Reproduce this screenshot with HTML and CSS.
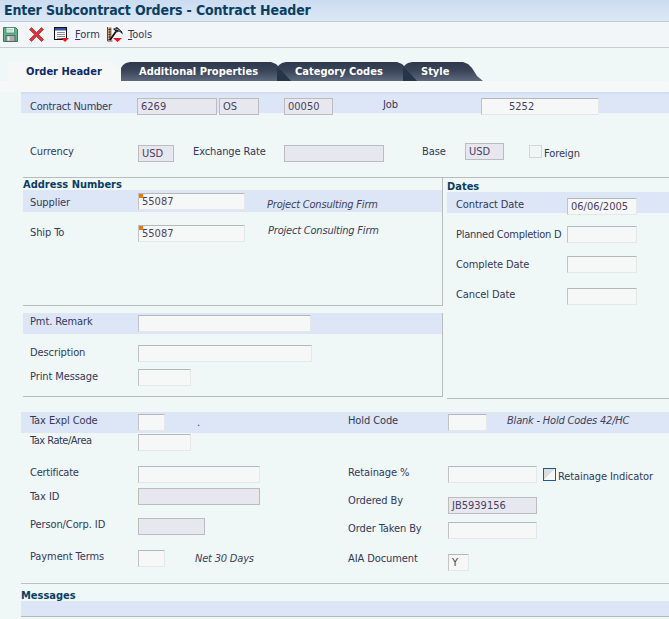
FILE: index.html
```html
<!DOCTYPE html>
<html lang="en">
<head>
<meta charset="utf-8">
<title>Enter Subcontract Orders - Contract Header</title>
<link rel="stylesheet" href="styles.css">
</head>
<body>
<header class="titlebar"><h1>Enter Subcontract Orders - Contract Header</h1></header>
<nav class="toolbar">
  <svg class="icon save" width="15" height="15" viewBox="0 0 15 15"><path d="M.5.500h12l2 2v12H.500z" fill="#63b384" stroke="#2f7f5a"/><rect x="3" y=".5" width="8.500" height="5.500" fill="#eef5f1" stroke="#3b8a66" stroke-width=".8"/><path d="M4 2.500h6M4 4h6" stroke="#9cc7ae" stroke-width=".8"/><rect x="3" y="8.500" width="9" height="6" fill="#a6aeb0" stroke="#4f5a5a" stroke-width=".8"/><rect x="4.500" y="9.500" width="2" height="4" fill="#eceff0"/></svg>
  <svg class="icon cancel" width="15" height="15" viewBox="0 0 15 15"><path d="M.5 2.500l2-2 5 5 5-5 2 2-5 5 5 5-2 2-5-5-5 5-2-2 5-5z" fill="#d8343a" stroke="#a8272c" stroke-width=".7"/></svg>
  <svg class="icon form" width="15" height="15" viewBox="0 0 15 15"><rect x=".5" y=".5" width="12" height="12" fill="#fff" stroke="#111"/><rect x="1" y="1" width="11" height="2.500" fill="#2f56a8"/><path d="M3 5.500h8M3 7.500h8M3 9.500h8M3 11.500h5" stroke="#8d8d96"/><path d="M7 11h8l-4 4z" fill="#e8121c"/></svg>
  <span class="tool-label"><u>F</u>orm</span>
  <svg class="icon tools" width="17" height="15" viewBox="0 0 17 15"><path d="M.5 0v14h5" fill="none" stroke="#6a4026" stroke-width="1"/><path d="M1.500.500h3v13h-3z" fill="#a8754a"/><path d="M1.500 2.500h2M1.500 5h2M1.500 7.500h2M1.500 10h2M1.500 12.500h2" stroke="#3c2414"/><path d="M6 2l4-2 5 4.500 1 3-3-2.500-2-.5-1 1z" fill="#1b1b1b"/><path d="M8 2l3 .5 2 2" stroke="#e8eef0" stroke-width=".7" fill="none"/><path d="M9 4.500L3 13" stroke="#111" stroke-width="1.800"/><path d="M6 11h9l-4.500 4z" fill="#e8121c"/></svg>
  <span class="tool-label"><u>T</u>ools</span>
</nav>

<div class="tabs">
  <div class="tab active">Order Header</div>
  <div class="tab t-props">Additional Properties</div>
  <div class="tab t-cats">Category Codes</div>
  <div class="tab t-style">Style</div>
</div>
<div class="tabstrip"></div>

<section class="hdr">
  <div class="band row-contract">
    <span class="lab tight l-contract">Contract Number</span>
    <span class="fld ro w80">6269</span>
    <span class="fld ro w40 ml2">OS</span>
    <span class="fld ro w49 ml25">00050</span>
    <span class="lab l-job">Job</span>
    <span class="fld in w118 v5252">5252</span>
  </div>
  <div class="row-currency">
    <span class="lab l-currency">Currency</span>
    <span class="fld ro w36">USD</span>
    <span class="lab l-rate">Exchange Rate</span>
    <span class="fld ro w100"></span>
    <span class="lab l-base">Base</span>
    <span class="fld ro w39 f-base">USD</span>
    <span class="check c-foreign"></span>
    <span class="lab l-foreign">Foreign</span>
  </div>
</section>

<div class="columns">
  <div class="col-left">
    <section class="box box-addr">
      <h2 class="sec">Address Numbers</h2>
      <div class="band row-supplier">
        <span class="lab lw t3">Supplier</span>
        <span class="fld in w107 req">55087</span>
        <em class="desc d-supplier">Project Consulting Firm</em>
      </div>
      <div class="row-shipto">
        <span class="lab lw">Ship To</span>
        <span class="fld in w107 req">55087</span>
        <em class="desc d-shipto">Project Consulting Firm</em>
      </div>
    </section>
    <section class="box box-pmt">
      <div class="band row-pmt">
        <span class="lab lw t0">Pmt. Remark</span>
        <span class="fld in w173"></span>
      </div>
      <div class="row-desc">
        <span class="lab lw t1">Description</span>
        <span class="fld in w174"></span>
      </div>
      <div class="row-print">
        <span class="lab lw t1">Print Message</span>
        <span class="fld in w53"></span>
      </div>
    </section>
  </div>
  <section class="col-dates">
    <h2 class="sec sec-dates">Dates</h2>
    <div class="band row-date first">
      <span class="lab dl">Contract Date</span>
      <span class="fld in w70">06/06/2005</span>
    </div>
    <div class="row-date r-planned"><span class="lab tight dl">Planned Completion D</span><span class="fld in w70"></span></div>
    <div class="row-date r-complete"><span class="lab dl">Complete Date</span><span class="fld in w70"></span></div>
    <div class="row-date r-cancel"><span class="lab dl">Cancel Date</span><span class="fld in w70 f-cancel"></span></div>
  </section>
</div>

<section class="tax">
  <div class="band row-tax">
    <span class="lab lw t0 ml9">Tax Expl Code</span>
    <span class="fld in w27">&nbsp;</span>
    <span class="dot">.</span>
    <span class="lab l-hold">Hold Code</span>
    <span class="fld in w39"></span>
    <em class="desc d-hold">Blank - Hold Codes 42/HC</em>
  </div>
  <div class="tax-cols">
    <div class="tax-left">
      <div class="tr r-rate"><span class="lab tighter lw">Tax Rate/Area</span><span class="fld in w53"></span></div>
      <div class="tr r-cert"><span class="lab tight lw">Certificate</span><span class="fld in w122"></span></div>
      <div class="tr r-taxid"><span class="lab lw">Tax ID</span><span class="fld ro w122"></span></div>
      <div class="tr r-person"><span class="lab lw">Person/Corp. ID</span><span class="fld ro w67"></span></div>
      <div class="tr r-terms"><span class="lab lw">Payment Terms</span><span class="fld in w27"></span><em class="desc d-terms">Net 30 Days</em></div>
    </div>
    <div class="tax-right">
      <div class="tr r-ret"><span class="lab rl">Retainage %</span><span class="fld in w89"></span><span class="check c-ret"></span><span class="lab l-ret">Retainage Indicator</span></div>
      <div class="tr r-ordered"><span class="lab rl">Ordered By</span><span class="fld ro w89 f-ordered">JB5939156</span></div>
      <div class="tr r-taken"><span class="lab rl">Order Taken By</span><span class="fld in w89"></span></div>
      <div class="tr r-aia"><span class="lab rl">AIA Document</span><span class="fld in w21">Y</span></div>
    </div>
  </div>
</section>

<section class="messages">
  <h2 class="sec sec-msg">Messages</h2>
  <div class="msg-band"></div>
</section>
</body>
</html>
```

FILE: styles.css
```css
* { box-sizing: border-box; }
html, body { margin: 0; padding: 0; }
body {
  width: 669px;
  height: 619px;
  overflow: hidden;
  background: #eff7f7;
  font-family: "DejaVu Sans Condensed", "DejaVu Sans", sans-serif;
  font-stretch: condensed;
  font-size: 11px;
  color: #33385a;
}

.titlebar {
  height: 22px;
  background: linear-gradient(#cbdcf0, #dce8f6);
  border-bottom: 1px solid #c2c9d0;
  padding-left: 4px;
}
.titlebar h1 {
  margin: 0;
  font-size: 14px;
  letter-spacing: -.14px;
  line-height: 20px;
  font-weight: bold;
  color: #0b3e62;
}

.toolbar {
  height: 26px;
  display: flex;
  align-items: center;
  background: #f2f6f9;
  border-bottom: 1px solid #c6ced2;
  padding-left: 3px;
}
.icon { flex: none; }
.cancel { margin-left: 11px; }
.form { margin-left: 10px; }
.tools { margin-left: 0; }
.tool-label { margin-left: 6px; color: #33385a; width: 32px; }
.tools + .tool-label { margin-left: 4px; }

.tabs {
  display: flex;
  height: 19px;
  margin-top: 14px;
  position: relative;
}
.tab {
  position: relative;
  height: 19px;
  line-height: 20px;
  font-weight: bold;
  font-size: 11px;
  color: #fff;
  background: linear-gradient(#2f394d 0%, #3a4459 45%, #5f697d 100%);
  clip-path: polygon(0 6px, 2px 3px, 5px 1px, 9px 0, calc(100% - 20px) 0, calc(100% - 15px) 2px, calc(100% - 11px) 6px, calc(100% - 6px) 14px, 100% 19px, 0 19px);
}
.t-cats::before, .t-style::before {
  content: "";
  position: absolute;
  left: 0;
  top: 0;
  width: 14px;
  height: 19px;
  background: #27354c;
  clip-path: polygon(0 5px, 5px 9px, 14px 19px, 0 19px);
}
.tab.active {
  width: 113px;
  height: 24px;
  margin-left: 8px;
  padding-left: 18px;
  color: #0d2a6a;
  background: #f6f8f8;
  clip-path: none;
  border-radius: 6px 16px 0 0;
}
.t-props { margin-left: 0; width: 170px; padding-left: 18px; }
.t-cats { margin-left: -14px; width: 140px; padding-left: 18px; }
.t-style { margin-left: -14px; width: 80px; padding-left: 18px; }

.tabstrip {
  height: 11px;
  background: linear-gradient(#f7f9f9, #f4f8f8);
}

.lab { flex: none; display: block; line-height: 14px; height: 14px; white-space: nowrap; letter-spacing: -.1px; }
.tight { letter-spacing: -.25px; }
.tighter { letter-spacing: -.5px; }
.fld {
  flex: none;
  display: block;
  height: 17px;
  line-height: 15px;
  padding-left: 3px;
  color: #4a3f62;
  white-space: nowrap;
}
.ro { background: #e6e7ef; border: 1px solid #bcbcbc; }
.in {
  background: #f6f7f7;
  border: 1px solid #e4e8e8;
  border-top-color: #b4b8b8;
  border-left-color: #c0c4c4;
}
.req { position: relative; }
.req::before {
  content: "";
  position: absolute;
  left: 0;
  top: 0;
  width: 4px;
  height: 4px;
  background: #e67a0a;
}
.desc { flex: none; font-style: italic; color: #3e3e5c; line-height: 14px; height: 14px; white-space: nowrap; letter-spacing: -.2px; }
.check { flex: none; display: block; width: 13px; height: 13px; background: #f1f5f3; border: 1px solid #d3d6d6; }
.band { background: #dce6f6; display: flex; align-items: flex-start; }

.w21 { width: 21px; } .w27 { width: 27px; } .w36 { width: 36px; } .w39 { width: 39px; }
.w40 { width: 40px; } .w49 { width: 49px; } .w53 { width: 53px; } .w67 { width: 67px; }
.w70 { width: 70px; } .w80 { width: 80px; } .w89 { width: 89px; } .w100 { width: 100px; }
.w107 { width: 107px; } .w118 { width: 118px; } .w122 { width: 122px; } .w173 { width: 173px; }
.w174 { width: 174px; }
.ml2 { margin-left: 2px; } .ml25 { margin-left: 25px; }

.hdr { margin-left: 21px; }
.row-contract {
  height: 21px;
  border-top: 2px solid #d2def0;
  padding-top: 4px;
}
.l-contract { width: 107px; margin: 2px 0 0 9px; }
.l-job { width: 98px; margin: 0 0 0 50px; }
.v5252 { padding-left: 27px; }

.row-currency { display: flex; align-items: flex-start; height: 64px; padding-top: 32px; }
.l-currency { width: 108px; margin: 0 0 0 9px; }
.l-rate { width: 91px; margin: 0 0 0 19px; }
.l-base { width: 43px; margin: 0 0 0 38px; }
.f-base { margin-top: -2px; }
.c-foreign { margin-left: 25px; }
.l-foreign { margin: 2px 0 0 2px; }

.columns { display: flex; height: 235px; margin-left: 23px; border-top: 1px solid #b8bcbc; }
.col-left { width: 420px; flex: none; }
.sec { margin: 0; font-size: 11px; font-weight: bold; color: #0b3e62; line-height: 14px; }
.box { border-right: 1px solid #b8bcbc; border-bottom: 1px solid #b8bcbc; }
.box-addr { height: 128px; }
.box-addr .sec { height: 12px; line-height: 13px; }
.box-pmt { height: 84px; margin-top: 7px; }

.row-supplier { height: 22px; padding-top: 3px; }
.lw { width: 108px; margin-left: 7px; }
.t0 { margin-top: 0; } .t1 { margin-top: 1px; } .t3 { margin-top: 3px; }
.d-supplier { margin: 5px 0 0 22px; letter-spacing: -.2px; }
.row-shipto { display: flex; align-items: flex-start; margin-top: 13px; }
.row-shipto .lab { margin-top: 1px; }
.d-shipto { margin: -1px 0 0 23px; }

.row-pmt { height: 21px; padding-top: 2px; }
.row-desc, .row-print { display: flex; align-items: flex-start; }
.row-desc { margin-top: 11px; }
.row-print { margin-top: 7px; }

.col-dates {
  width: 222px;
  flex: none;
  margin-left: 4px;
  height: 221px;
  border-bottom: 1px solid #b8bcbc;
}
.sec-dates { height: 14px; line-height: 18px; }
.row-date { display: flex; align-items: flex-start; }
.row-date.first { height: 21px; padding-top: 6px; }
.dl { width: 111px; margin: 0 0 0 9px; }
.r-planned { margin-top: 13px; }
.r-complete, .r-cancel { margin-top: 13px; }
.f-cancel { margin-top: 2px; }
.r-complete .dl, .r-planned .dl { margin-top: 2px; }
.r-cancel .dl { margin-top: 2px; }

.tax { margin-left: 21px; }
.row-tax { height: 21px; padding-top: 2px; }
.ml9 { margin-left: 9px; }
.dot { width: 5px; margin: 2px 0 0 32px; flex: none; line-height: 14px; }
.l-hold { width: 100px; margin: 0 0 0 146px; }
.d-hold { margin: 0 0 0 20px; }

.tax-cols { display: flex; }
.tax-left { width: 327px; flex: none; }
.tax-right { flex: 1; }
.tr { display: flex; align-items: flex-start; }
.tr .lw { margin-left: 9px; }
.r-rate { margin-top: 1px; height: 17px; }
.r-cert { margin-top: 15px; height: 17px; }
.r-taxid { margin-top: 5px; height: 17px; }
.r-person { margin-top: 13px; height: 17px; }
.r-terms { margin-top: 15px; height: 17px; }
.r-taxid .lab { margin-top: 2px; }
.d-terms { margin: 2px 0 0 30px; }

.rl { width: 100px; }
.r-ret { margin-top: 33px; height: 17px; }
.r-ordered { margin-top: 14px; height: 17px; }
.r-taken { margin-top: 8px; height: 17px; }
.r-aia { margin-top: 15px; height: 17px; }
.r-ordered .rl { margin-top: -3px; }
.r-aia .rl { margin-top: -2px; }
.c-ret { margin: 2px 0 0 6px; border-color: #1f5c8c; background: linear-gradient(135deg, #d9dedc 50%, #f3f7f5 50%); }
.l-ret { margin: 4px 0 0 2px; }

.messages { margin-left: 21px; margin-top: 12px; border-top: 1px solid #bcc0c0; }
.sec-msg { height: 17px; line-height: 24px; }
.msg-band { height: 16px; background: #dce6f6; border-bottom: 1px solid #b4b8b8; }
```
